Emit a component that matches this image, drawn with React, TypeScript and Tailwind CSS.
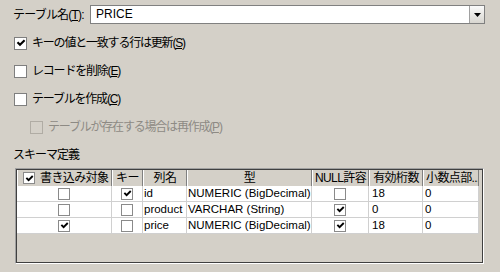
import React from "react";

const FONT = { fontFamily: '"Liberation Sans", "Noto Sans CJK JP", sans-serif' };

function Check({ size = 10 }: { size?: number }) {
  return (
    <svg width={size} height={size} viewBox="0 0 10 10">
      <path d="M1.5 4.2 L4 6.8 L8.6 2.2" fill="none" stroke="#000" strokeWidth="2.1" />
    </svg>
  );
}

function Box({ checked = false, disabled = false }: { checked?: boolean; disabled?: boolean }) {
  return (
    <span
      className={
        "flex h-[13px] w-[13px] shrink-0 items-center justify-center border " +
        (disabled ? "border-[#b0aca4] bg-[#d4d0c8]" : "border-[#7f7f7f] bg-white")
      }
    >
      {checked && <Check />}
    </span>
  );
}

function SmallBox({ checked = false }: { checked?: boolean }) {
  return (
    <span className="flex h-[12px] w-[12px] shrink-0 items-center justify-center border border-[#8a8a8a] bg-white">
      {checked && <Check size={9} />}
    </span>
  );
}

function CheckRow({
  checked,
  label,
  mn,
  disabled,
  indent,
}: {
  checked?: boolean;
  label: string;
  mn: string;
  disabled?: boolean;
  indent?: boolean;
}) {
  return (
    <div className={"flex h-[28px] items-center gap-[5px] " + (indent ? "pl-[30px]" : "pl-[14px]")}>
      <Box checked={checked} disabled={disabled} />
      <span className={"text-[12px] tracking-[-1.2px] " + (disabled ? "text-[#8d8a84]" : "text-black")}>
        {label}(<span className="underline">{mn}</span>)
      </span>
    </div>
  );
}

const rows = [
  { w: false, k: true, name: "id", type: "NUMERIC (BigDecimal)", n: false, p: "18", s: "0" },
  { w: false, k: false, name: "product", type: "VARCHAR (String)", n: true, p: "0", s: "0" },
  { w: true, k: false, name: "price", type: "NUMERIC (BigDecimal)", n: true, p: "18", s: "0" },
];

const headCell = "flex h-[16px] items-center justify-center border-r border-[#808080] border-l border-l-white bg-[#d4d0c8] text-[12px] tracking-[-0.6px] text-black whitespace-nowrap overflow-hidden";
const bodyCell = "flex h-[16px] items-center border-r border-b border-[#d0d0d0] bg-white text-[11.5px] text-black whitespace-nowrap overflow-hidden";

export default function App() {
  return (
    <div className="h-[272px] w-[500px] bg-[#d4d0c8] pt-[5px]" style={FONT}>
      <div className="flex h-[19px] items-center">
        <span className="pl-[13px] w-[90px] text-[12px] tracking-[-0.8px] text-black">
          テーブル名(<span className="underline">T</span>):
        </span>
        <div className="flex h-[19px] w-[395px] border border-[#808080] bg-white">
          <span className="flex-1 pl-[5px] text-[12px] leading-[17px] text-black">PRICE</span>
          <span className="flex h-[17px] w-[15px] items-center justify-center border-l border-[#a0a0a0] bg-gradient-to-b from-[#fafafa] to-[#d8d6d0]">
            <svg width="7" height="4" viewBox="0 0 7 4">
              <path d="M0 0 H7 L3.5 4 Z" fill="#000" />
            </svg>
          </span>
        </div>
      </div>
      <div className="mt-[5px]">
        <CheckRow checked label="キーの値と一致する行は更新" mn="S" />
        <CheckRow label="レコードを削除" mn="E" />
        <CheckRow label="テーブルを作成" mn="C" />
        <CheckRow label="テーブルが存在する場合は再作成" mn="P" disabled indent />
        <div className="flex h-[27px] items-center pl-[13px] text-[12px] tracking-[-1px] text-black">スキーマ定義</div>
      </div>
      <div className="ml-[15px] w-[469px] border border-t-[#a0a0a0] border-l-[#a0a0a0] border-b-white border-r-white">
        <div className="h-[94px] border border-[#404040] bg-[#d4d0c8]">
          <div className="grid grid-cols-[95px_31px_44px_125px_57px_54px_56px]">
            <div className={headCell + " justify-start gap-[5px] pl-[5px]"}>
              <SmallBox checked />
              <span>書き込み対象</span>
            </div>
            <div className={headCell}>キー</div>
            <div className={headCell}>列名</div>
            <div className={headCell}>型</div>
            <div className={headCell}>NULL許容</div>
            <div className={headCell}>有効桁数</div>
            <div className={headCell + " justify-start pl-[2px]"}>小数点部...</div>
            {rows.map((r) => (
              <React.Fragment key={r.name}>
                <div className={bodyCell + " justify-center"}>
                  <SmallBox checked={r.w} />
                </div>
                <div className={bodyCell + " justify-center"}>
                  <SmallBox checked={r.k} />
                </div>
                <div className={bodyCell + " pl-[1px]"}>{r.name}</div>
                <div className={bodyCell + " pl-[1px]"}>{r.type}</div>
                <div className={bodyCell + " justify-center"}>
                  <SmallBox checked={r.n} />
                </div>
                <div className={bodyCell + " pl-[3px]"}>{r.p}</div>
                <div className={bodyCell + " pl-[2px]"}>{r.s}</div>
              </React.Fragment>
            ))}
          </div>
        </div>
      </div>
    </div>
  );
}
